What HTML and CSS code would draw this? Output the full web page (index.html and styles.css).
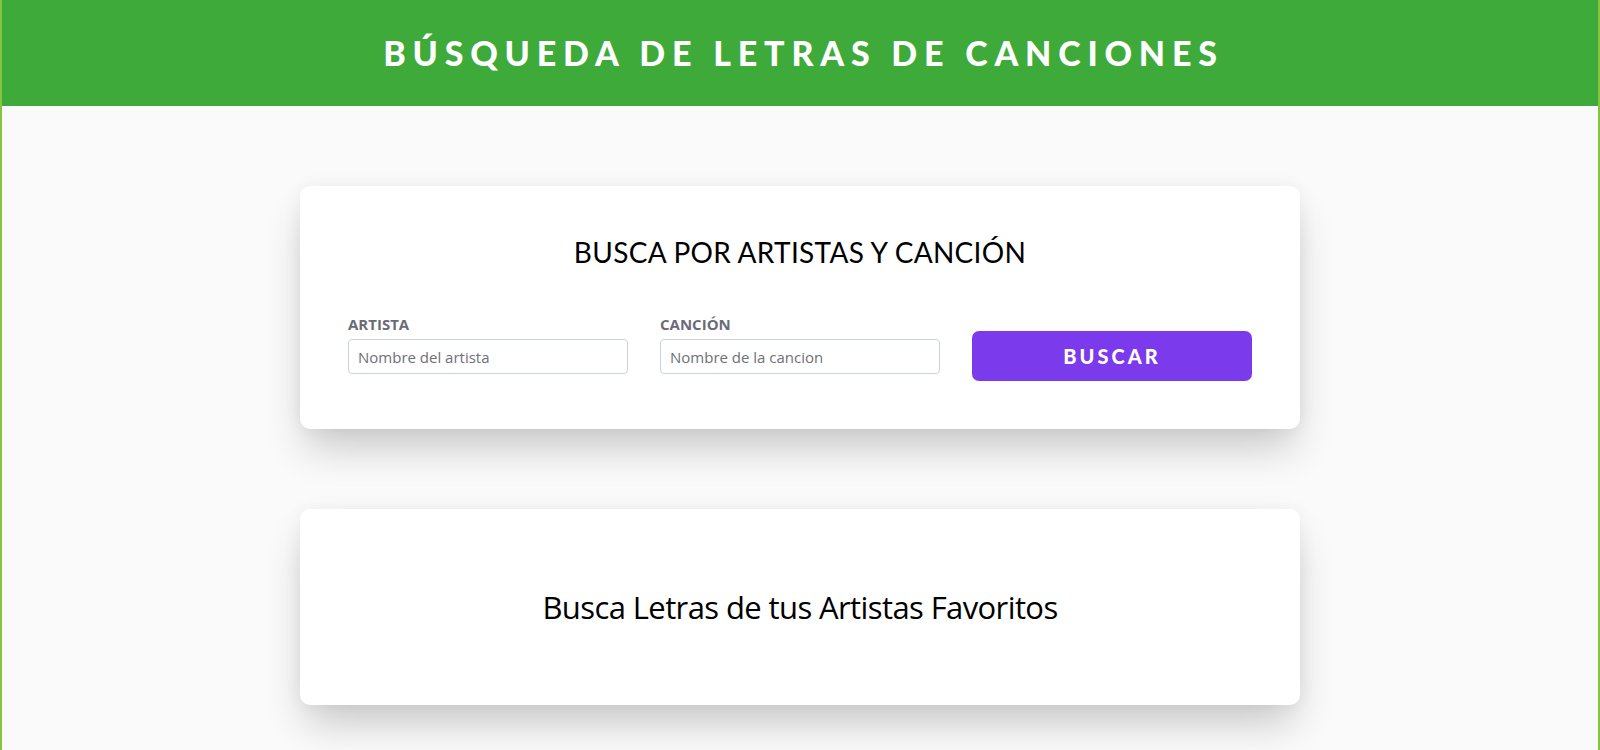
FILE: index.html
```html
<!DOCTYPE html>
<html lang="es">
<head>
<meta charset="utf-8">
<title>Búsqueda de letras de canciones</title>
<link rel="stylesheet" href="styles.css">
</head>
<body>
<div class="page">
  <header class="topbar">
    <h1 class="title">Búsqueda de letras de canciones</h1>
  </header>
  <main class="content">
    <section class="card search-card">
      <h2 class="search-heading">Busca por Artistas y Canción</h2>
      <form class="search-grid">
        <div class="field">
          <label class="field-label" for="artista">Artista</label>
          <input class="field-input" id="artista" type="text" placeholder="Nombre del artista">
        </div>
        <div class="field">
          <label class="field-label" for="cancion">Canción</label>
          <input class="field-input" id="cancion" type="text" placeholder="Nombre de la cancion">
        </div>
        <button class="search-btn" type="button">Buscar</button>
      </form>
    </section>
    <section class="card result-card">
      <p class="result-text">Busca Letras de tus Artistas Favoritos</p>
    </section>
  </main>
</div>
</body>
</html>
```

FILE: styles.css
```css
* { box-sizing: border-box; }

html, body {
  margin: 0;
  padding: 0;
}

body {
  background: #fafafa;
  font-family: "Open Sans", "Noto Sans", sans-serif;
  color: #000;
}

.page {
  min-height: 100vh;
  border-left: 2px solid #86c440;
  border-right: 2px solid #86c440;
}

.topbar {
  background: #3daa3a;
  height: 106px;
  display: flex;
  align-items: center;
  justify-content: center;
}

.title {
  margin: 0;
  color: #fff;
  font-family: "Lato", sans-serif;
  font-weight: 900;
  font-size: 34px;
  letter-spacing: 6.8px;
  text-transform: uppercase;
  line-height: 1;
  padding-left: 7px;
}

.content {
  display: flex;
  flex-direction: column;
  align-items: center;
  gap: 80px;
  padding-top: 80px;
  padding-bottom: 40px;
}

.card {
  width: 1000px;
  background: #fff;
  border-radius: 10px;
  box-shadow: 0 24px 40px -6px rgba(0, 0, 0, 0.2), 0 0 18px rgba(0, 0, 0, 0.05);
}

.search-card {
  padding: 48px;
}

.search-heading {
  margin: 0 0 44px;
  text-align: center;
  font-family: "Lato", sans-serif;
  font-weight: 400;
  font-size: 28px;
  line-height: 36px;
  text-transform: uppercase;
  letter-spacing: 0.3px;
}

.search-grid {
  display: grid;
  grid-template-columns: repeat(3, 1fr);
  column-gap: 32px;
  align-items: end;
  margin: 0;
}

.field {
  display: flex;
  flex-direction: column;
  padding-bottom: 7px;
}

.field-label {
  font-weight: 700;
  font-size: 15px;
  line-height: 20px;
  color: #6b6b78;
  text-transform: uppercase;
  margin-bottom: 5px;
}

.field-input {
  height: 35px;
  border: 1px solid #cbd3e0;
  border-radius: 4px;
  padding: 0 9px;
  font-family: "Open Sans", sans-serif;
  font-size: 15px;
  color: #333;
  background: #fff;
  outline: none;
}

.field-input::placeholder {
  color: #6f6f78;
}

.search-btn {
  height: 50px;
  border: none;
  border-radius: 7px;
  background: #7c3aed;
  color: #fff;
  font-family: "Lato", sans-serif;
  font-weight: 900;
  font-size: 20px;
  letter-spacing: 3px;
  text-transform: uppercase;
  cursor: pointer;
}

.result-card {
  padding: 78px 48px;
  text-align: center;
}

.result-text {
  margin: 0;
  font-family: "Open Sans", sans-serif;
  font-weight: 400;
  font-size: 31px;
  line-height: 40px;
  letter-spacing: -0.6px;
}
```
